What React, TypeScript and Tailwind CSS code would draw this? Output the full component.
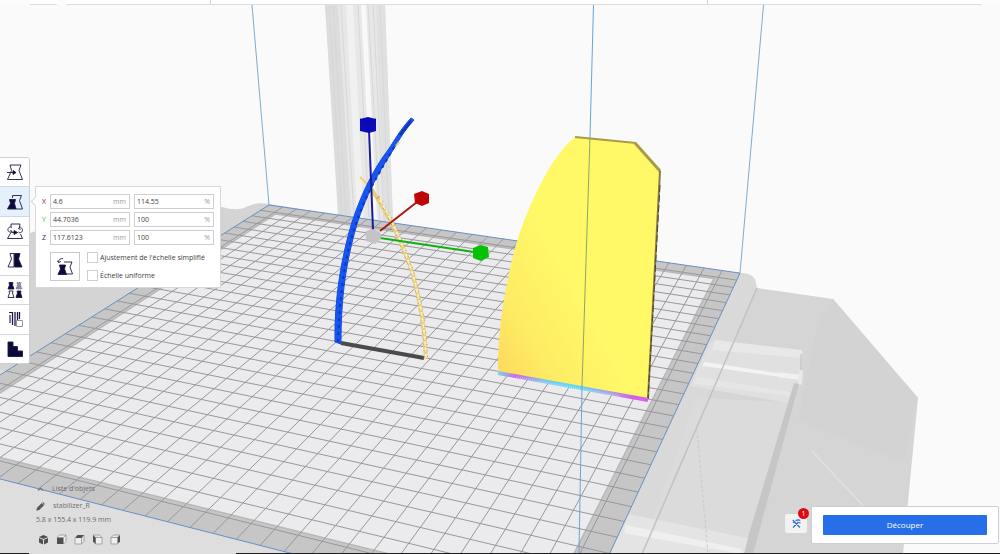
import React, { useState } from 'react';

type Point = [number, number];

const CELLS = 30;
const BORDER = 1.2;

// Perspective projection of the build plate, u and v are given in grid cells
function project(u: number, v: number): Point {
  const s = u / CELLS;
  const t = v / CELLS;
  const w = 1 - 0.1324 * s - 0.3517 * t;
  return [(373 * s - 344.9 * t + 269) / w, (31.9 * s + 86.1 * t + 205) / w];
}

function toPoints(points: Point[]) {
  return points.map(([x, y]) => `${x.toFixed(1)},${y.toFixed(1)}`).join(' ');
}

function plateRect(inset: number) {
  const far = CELLS - inset;
  return toPoints([
    project(inset, inset),
    project(far, inset),
    project(far, far),
    project(inset, far),
  ]);
}

function PlateGrid() {
  const d = Array.from({ length: CELLS - 1 }, (_, i) => {
    const n = i + 1;
    return (
      `M${toPoints([project(n, 0)])}L${toPoints([project(n, CELLS)])}` +
      `M${toPoints([project(0, n)])}L${toPoints([project(CELLS, n)])}`
    );
  }).join('');

  return (
    <g>
      <polygon points={plateRect(0)} fill="#c6c6c7" />
      <polygon points={plateRect(BORDER)} fill="#ebebed" stroke="#b8b8b9" strokeWidth="1.5" />
      <path d={d} stroke="#98989b" strokeWidth="1" fill="none" />
      <polygon points={plateRect(0)} fill="none" stroke="#6690c4" strokeWidth="1" />
    </g>
  );
}

function Printer() {
  return (
    <g>
      {/* Frame on the left */}
      <path d="M0 243L45 228L150 211L222 207Q238 212 248 206Q256 202 269 204L400 225V400L0 420Z" fill="#d4d4d4" />
      <path d="M0 370L400 400L640 554H0Z" fill="#dddddd" />
      <path d="M0 479L287 554H0Z" fill="#dedede" />
      {/* Vertical column */}
      <path d="M325 5H385L393 222L339 215Z" fill="#e7e7e7" />
      <path d="M325 5H338L351 216L338 215Z" fill="#dcdcdc" />
      <path d="M346 5H353L364 218L357 217Z" fill="#f1f1f1" />
      <path d="M361 5H366L377 219L372 219Z" fill="#f8f8f8" />
      <path d="M376 5H385L393 222L384 221Z" fill="#e0e0e0" />
      <path d="M341 5L354 216M358 5L369 218M368 5L380 220M373 5L384 221" stroke="#d8d8d8" fill="none" />
      <path d="M329 5L342 215M333 5L346 216M380 5L389 221" stroke="#d4d4d4" strokeWidth="0.7" fill="none" />
      {/* Housing on the right */}
      <path d="M740 273Q754 273 757 288L833 299L918 398L903 554H560V400Z" fill="#d5d5d5" />
      <path d="M740 273Q758 273 756 288L643 554H600V420Z" fill="#d9d9d9" />
      <path d="M833 299L818 325L798 420L903 462L918 398Z" fill="#d3d3d3" />
      <path d="M697 398L790 402L745 554H640Z" fill="#dbdbdb" />
      <path d="M710 342L803 352L794 404L690 386Z" fill="#e0e0e0" />
      <path d="M715 340L802 350V358L712 350Z" fill="#e8e8e8" />
      <path d="M705 362L796 376V379L702 366Z" fill="#f3f3f3" />
      <path d="M697 377L790 392V396L694 384Z" fill="#e6e6e6" />
      <path d="M780 375L798 377" stroke="#f1f1f1" strokeWidth="5" strokeLinecap="round" />
      <path d="M801 372L800 383" stroke="#e9e9e9" strokeWidth="4" strokeLinecap="round" />
      <path d="M801 354V370" stroke="#c8c8c8" strokeWidth="1.5" />
      <path d="M794 383L799 384L753 554H743Z" fill="#c6c6c6" />
      <path d="M628 514L748 538L744 554H610Z" fill="#e4e4e4" />
      <path d="M626 525L742 549V554L624 533Z" fill="#efefef" />
      <path d="M757 288L642 554" stroke="#c2c2c2" strokeWidth="1.5" fill="none" />
      <path d="M697 430L708 554" stroke="#cacaca" strokeDasharray="3 2" fill="none" />
      <path d="M812 451L868 511" stroke="#dedede" strokeWidth="2" fill="none" />
    </g>
  );
}

function Models() {
  const blade =
    'M414 120C402 133 399 141 390 155C378 173 366 196 357 224C346 262 341 296 341 344L335 342C334 298 342 255 352 222C362 192 374 168 388 150C396 138 400 130 411 118Z';

  return (
    <g>
      {/* Blade standing in front of the column */}
      <path d="M341 343L424 358" stroke="#4a4a4a" strokeWidth="4" />
      <path d="M360 177L372 189" stroke="#f3cf78" strokeWidth="2" />
      <path d="M370 187C394 223 404 248 413 275C421 304 425 330 426 359" stroke="#e8cd80" strokeWidth="4" fill="none" />
      <path d="M378 197C394 223 404 248 413 275C421 304 425 330 426 359" stroke="#b89c4c" strokeWidth="4" strokeDasharray="1 5" fill="none" />
      <path d="M380 200C395 225 404 248 413 275C421 304 425 330 426 359" stroke="#f6efc4" strokeWidth="2" strokeDasharray="4 2" fill="none" />
      <path d={blade} fill="#1656f5" stroke="#174cd8" strokeWidth="1" />
      <path d="M411 121L400 135" stroke="#1238bb" strokeWidth="3" />
      <path d="M394 147L373 184C352 225 341 262 338 342" stroke="#1038b8" strokeWidth="2" strokeDasharray="3 4" fill="none" />
      <path d="M396 146L399 142" stroke="#e5cc80" strokeWidth="2" />

      {/* Stabilizer */}
      <path d="M575 137L636 143L660 171L648 400L498 372C498 335 502 308 508 278C516 237 530 201 550 167C558 154 567 143 575 137Z" fill="url(#stabilizer)" />
      <path d="M575 137L636 143" stroke="#a99b45" strokeWidth="2" fill="none" />
      <path d="M635 143L660 171" stroke="#a99b45" strokeWidth="3" fill="none" />
      <path d="M660 171L648 399" stroke="#8a7b40" strokeWidth="2" fill="none" />
      <path d="M660 185L648 399" stroke="#4a4430" strokeWidth="1" strokeDasharray="7 3" fill="none" />
      <path d="M498 373L648 400" stroke="url(#brim)" strokeWidth="4" fill="none" />
      <path d="M516 377L620 396" stroke="#ffffff" strokeOpacity="0.3" strokeWidth="2" strokeDasharray="1 1" fill="none" />
    </g>
  );
}

function Gizmo() {
  return (
    <g>
      <path d="M373 230L369 130" stroke="#1a1a9c" strokeWidth="2" />
      <path d="M380 231L417 202" stroke="#a81818" strokeWidth="2" />
      <path d="M380 238L474 252" stroke="#10b010" strokeWidth="2" />
      <path d="M366 231L373 229L380 232L381 239L375 244L366 241Z" fill="#c3c3c8" />
      <path d="M360 119L368 117L376 119V131L369 133L360 131Z" fill="#0b0bb8" />
      <path d="M360 119L368 122L376 119M368 122V132" stroke="#0808a0" fill="none" />
      <path d="M414 194L422 191L429 194V203L422 206L415 203Z" fill="#bd0505" />
      <path d="M473 248L481 245L488 247L489 257L481 261L473 258Z" fill="#08c008" />
    </g>
  );
}

function Scene() {
  return (
    <svg className="absolute inset-0 h-full w-full" viewBox="0 0 1000 554" preserveAspectRatio="xMidYMid slice" aria-hidden="true">
      <defs>
        <linearGradient id="stabilizer" x1="0" y1="0.9" x2="0.45" y2="0.5">
          <stop offset="0" stopColor="#fcd95e" />
          <stop offset="0.4" stopColor="#feec64" />
          <stop offset="1" stopColor="#fff968" />
        </linearGradient>
        <linearGradient id="brim">
          <stop offset="0" stopColor="#77d5ee" />
          <stop offset="0.12" stopColor="#cf68e6" />
          <stop offset="0.3" stopColor="#7fc4ee" />
          <stop offset="0.5" stopColor="#5cdcf0" />
          <stop offset="0.75" stopColor="#a9a2ea" />
          <stop offset="0.9" stopColor="#d55eea" />
          <stop offset="1" stopColor="#d55eea" />
        </linearGradient>
      </defs>
      <Printer />
      <PlateGrid />
      <path d="M252 5L269 205M763.5 5L740 273" stroke="#7fabc9" fill="none" />
      <Models />
      <path d="M593.5 5L590 137M582 386L579 554" stroke="#6ba3d2" fill="none" />
      <path d="M590 137L582 386" stroke="#8ba56d" strokeWidth="1" fill="none" />
      <Gizmo />
    </svg>
  );
}

const BEAKER = 'M3 1H14L12 6.5L15.5 15.5H.5L4.5 6.5Z';

function ToolIcon({ name }: { name: string }) {
  return (
    <svg className="h-4 w-4" viewBox="0 0 16 16" fill="none" stroke="#1d1b45" strokeWidth="0.9">
      {name === 'Déplacer' && (
        <>
          <path d={BEAKER} />
          <path d="M0 8.5H8" />
          <path d="M6 6.5L9 8.5L6 10.5Z" fill="#0c0a3c" />
        </>
      )}
      {name === 'Échelle' && (
        <>
          <path d="M5.500 4V1.500H14.500L12.500 6.500L15.500 15H9" />
          <path d="M2.500 5.500H8.500L7.500 9.500L9 15H.5L3.500 9.500Z" fill="#0c0a3c" />
        </>
      )}
      {name === 'Tourner' && (
        <>
          <path d="M4 4V1H13L12.500 4M3 11L.5 15.500H15.500L13.500 11" />
          <path d="M5 4.500C2.500 3 .500 5 1 7.500C1.500 9 3.500 9.500 5 8.500M3 11L5 8.500L3.500 7" />
          <path d="M11.500 9C13.500 10.500 15.500 9 15.500 7C15.500 5 13 4 11.500 5.500M13 3.500L11.500 5.500L13.500 6.500" />
          <path d="M5 9.500H8" />
          <path d="M7 7.500L10.500 9.500L7 11.500Z" fill="#0c0a3c" />
        </>
      )}
      {name === 'Miroir' && (
        <>
          <path d="M7 1.500H3L4.500 7L1 15H7Z" />
          <path d="M7.500 1.500H13L11.500 7L15 15H7.500Z" fill="#0c0a3c" />
        </>
      )}
      {name === 'Paramètres par modèle' && (
        <>
          <path d="M2 .5H6L5.500 3L7 7H1L2.500 3ZM10 9H14L13.500 11L15 15.500H9L10.500 11Z" fill="#0c0a3c" />
          <path d="M2 9H6L5.500 11L7 15.500H1L2.500 11Z" />
          <path d="M10 .5H14L13.500 3L15 7H9L10.500 3Z" fill="#8d8ca4" stroke="#6d6c88" strokeDasharray="1 1" />
        </>
      )}
      {name === 'Bloqueur de supports' && (
        <>
          <path d="M2 1.500H5M3 4V12" strokeWidth="1.100" />
          <path d="M5.500 1V14M8 1V15M10.500 1V10M12.500 1V8" strokeWidth="1.300" />
          <path d="M9.500 9.500H15.500V15.500H9.500Z" fill="#fff" stroke="#8a8a95" />
        </>
      )}
      {name === 'Supports' && <path d="M1 1H6V5.500H10.500V10H15.500V15.500H1Z" fill="#0c0a3c" />}
    </svg>
  );
}

const TOOLS = [
  'Déplacer',
  'Échelle',
  'Tourner',
  'Miroir',
  'Paramètres par modèle',
  'Bloqueur de supports',
  'Supports',
];

function Toolbar({ active, onSelect }: { active: string; onSelect: (tool: string) => void }) {
  return (
    <nav className="flex h-[207px] w-[30px] shrink-0 flex-col divide-y divide-[#d3d8de] overflow-hidden rounded-r-[3px] border border-l-0 border-[#d0d0d4] bg-white">
      {TOOLS.map(tool => (
        <button
          key={tool}
          type="button"
          aria-label={tool}
          onClick={() => onSelect(tool)}
          className={
            tool === active
              ? 'flex flex-1 items-center justify-center bg-[#e4f0fb]'
              : 'flex flex-1 items-center justify-center bg-white'
          }
        >
          <ToolIcon name={tool} />
        </button>
      ))}
    </nav>
  );
}

interface FieldProps {
  label: string;
  unit: string;
  value: string;
  onChange: (value: string) => void;
}

function Field({ label, unit, value, onChange }: FieldProps) {
  return (
    <div className="flex h-[15px] min-w-0 flex-1 items-center border border-[#cfcfd3] bg-white pr-[3px] pl-[2px]">
      <input
        aria-label={label}
        value={value}
        onChange={e => onChange(e.target.value)}
        className="min-w-0 flex-1 bg-transparent text-[7px] leading-[13px] text-[#3f3f43] outline-none"
      />
      <span className="text-[7px] leading-[13px] text-[#9a9a9e]">{unit}</span>
    </div>
  );
}

const AXES = [
  { axis: 'X', color: 'text-[#b8202c]' },
  { axis: 'Y', color: 'text-[#2fb52f]' },
  { axis: 'Z', color: 'text-[#22228c]' },
];

function ScalePanel() {
  const [sizes, setSizes] = useState(['4.6', '44.7036', '117.6123']);
  const [percents, setPercents] = useState(['114.55', '100', '100']);
  const [snap, setSnap] = useState(false);
  const [uniform, setUniform] = useState(false);

  const replace = (list: string[], index: number, value: string) =>
    list.map((item, i) => (i === index ? value : item));

  return (
    <section className="relative mt-[29px] ml-[5px] w-[186px] border border-[#d8d8da] bg-white px-[6px] pt-[7px] pb-[6px]">
      <div className="absolute top-[11px] -left-[4px] h-[7px] w-[7px] rotate-45 border-b border-l border-[#d8d8da] bg-white" />
      <div className="flex flex-col gap-[3px]">
        {AXES.map(({ axis, color }, i) => (
          <div key={axis} className="flex items-center gap-[4px]">
            <span className={`w-[4px] text-[7px] leading-[13px] ${color}`}>{axis}</span>
            <Field
              label={`${axis} en mm`}
              unit="mm"
              value={sizes[i]}
              onChange={value => setSizes(prev => replace(prev, i, value))}
            />
            <Field
              label={`${axis} en %`}
              unit="%"
              value={percents[i]}
              onChange={value => setPercents(prev => replace(prev, i, value))}
            />
          </div>
        ))}
      </div>
      <div className="mt-[7px] ml-[8px] flex gap-[7px]">
        <button
          type="button"
          aria-label="Réinitialiser l'échelle"
          className="flex h-[29px] w-[30px] items-center justify-center border border-[#c9c9cd] bg-white"
        >
          <svg className="h-[19px] w-4" viewBox="0 0 16 19" fill="none" stroke="#1d1b45" strokeWidth="0.9">
            <path d="M7 5H15L13 10L15.500 17H9" />
            <path d="M2.500 8H8.500L7.500 12L9.500 17.500H1L3.500 12Z" fill="#0c0a3c" />
            <path d="M1.500 5C1.500 2.500 3.500 1.500 6 1.500M0 3.500L1.500 5.500L4 4.500" />
          </svg>
        </button>
        <div className="flex flex-col gap-[7px]">
          <label className="flex h-[11px] items-center gap-[2px] text-[7px] leading-[11px] text-[#3d3d42]">
            <input
              type="checkbox"
              checked={snap}
              onChange={e => setSnap(e.target.checked)}
              className="h-[11px] w-[11px] shrink-0 appearance-none border border-[#cfcfd3] bg-white checked:bg-[#266fe8]"
            />
            Ajustement de l'échelle simplifié
          </label>
          <label className="flex h-[11px] items-center gap-[2px] text-[7px] leading-[11px] text-[#3d3d42]">
            <input
              type="checkbox"
              checked={uniform}
              onChange={e => setUniform(e.target.checked)}
              className="h-[11px] w-[11px] shrink-0 appearance-none border border-[#cfcfd3] bg-white checked:bg-[#266fe8]"
            />
            Échelle uniforme
          </label>
        </div>
      </div>
    </section>
  );
}

const VIEWS = [
  { label: 'Vue 3D', solid: 'M1 3L5.500 1L10 3L5.500 5ZM1 4L5 5.800V10.500L1 8.500ZM10 4L6 5.800V10.500L10 8.500Z', edge: '' },
  { label: 'Vue de face', solid: 'M1 3.500H7.500V10H1Z', edge: 'M1 3.500L3.500 1H10V7.500L7.500 10M7.500 3.500L10 1' },
  { label: 'Vue du dessus', solid: 'M1 4L3.500 1H10L7.500 4Z', edge: 'M1 4V10H7.500V4M7.500 10L10 7.500V1' },
  { label: 'Vue de gauche', solid: 'M1 1L3.500 3.500V10L1 7.500Z', edge: 'M1 1H7.500L10 3.500V10H3.500V3.500H10' },
  { label: 'Vue de droite', solid: 'M7.500 3.500L10 1V7.500L7.500 10Z', edge: 'M7.500 3.500H1V10H7.500M1 3.500L3.500 1H10' },
];

function ObjectInfo() {
  return (
    <section className="ml-[36px] flex flex-col items-start text-[7px] text-[#6d6d70]">
      <button type="button" className="flex h-[14px] items-center gap-[7px]">
        <svg className="h-[9px] w-[9px]" viewBox="0 0 9 9" fill="none" stroke="#77777a" strokeWidth="1.2">
          <path d="M2 5.500L4.500 3L7 5.500" />
        </svg>
        Liste d'objets
      </button>
      <div className="mt-[4px] flex h-[12px] items-center gap-[8px]">
        <svg className="h-[9px] w-[9px]" viewBox="0 0 9 9" fill="#565659">
          <path d="M.3 8.700L1 5.800L5.800 .9L8.100 3.200L3.200 8ZM6.300 .6L7 .1L8.900 2L8.400 2.700Z" />
        </svg>
        stabilizer_R
      </div>
      <p className="mt-[2px] leading-[12px]">5.8 x 155.4 x 119.9 mm</p>
      <div className="mt-[8px] ml-[2px] flex gap-[7px]">
        {VIEWS.map(view => (
          <button key={view.label} type="button" aria-label={view.label}>
            <svg className="h-[11px] w-[11px]" viewBox="0 0 11 11" fill="none" stroke="#8b8b8e" strokeWidth="0.7">
              {view.edge && <path d={view.edge} fill="#eeeeee" />}
              <path d={view.solid} fill="#4f4f52" stroke="none" />
            </svg>
          </button>
        ))}
      </div>
    </section>
  );
}

function SlicePanel() {
  return (
    <section className="mr-[1px] mb-[1px] flex items-start gap-[4px]">
      <button
        type="button"
        aria-label="Avertissements"
        className="relative mt-[8px] flex h-[19px] w-[22px] items-center justify-center rounded-[2px] bg-[#f1f2f4]"
      >
        <svg className="h-[9px] w-[9px]" viewBox="0 0 9 9" fill="none" stroke="#2f66c4" strokeWidth="1.2">
          <path d="M1 8.500L6.500 3M8 8.500L2.500 3M.8 .8L2.500 3L.8 3.500M3.500 1.800Q6 .3 8.300 1.500M6 3.500L8.500 3.800" />
        </svg>
        <span className="absolute -top-[6px] -right-[2px] h-[11px] w-[11px] rounded-full bg-[#e10a12] text-center text-[7px] leading-[11px] text-white">
          1
        </span>
      </button>
      <div className="w-[188px] rounded-[2px] border border-[#cfcfd1] bg-white px-[11px] py-[8px]">
        <button type="button" className="block h-[20px] w-full rounded-[1px] bg-[#266fe8] text-[8px] leading-[20px] text-white">
          Découper
        </button>
      </div>
    </section>
  );
}

export default function App() {
  const [activeTool, setActiveTool] = useState('Échelle');

  return (
    <div className="relative flex min-h-screen flex-col overflow-hidden bg-[#fafafa] font-['Open_Sans','Noto_Sans',sans-serif]">
      <Scene />

      {/* Lower edge of the stage bar */}
      <header className="relative flex h-[5px] gap-[9px] bg-[#fbfbfb] pr-[18px] pl-[30px]">
        <div className="w-[27px] border-b border-[#dedede] bg-white" />
        <div className="flex flex-1 border-b border-[#dedede] bg-white">
          <div className="w-[145px] border-r border-[#d4d4d4]" />
          <div className="flex-1 border-r border-[#d4d4d4]" />
          <div className="w-[274px]" />
        </div>
      </header>

      <main className="relative flex flex-1 flex-col justify-between pt-[152px]">
        <div className="flex items-start">
          <Toolbar active={activeTool} onSelect={setActiveTool} />
          {activeTool === 'Échelle' && <ScalePanel />}
        </div>
        <div className="flex items-end justify-between pb-[8px]">
          <ObjectInfo />
          <SlicePanel />
        </div>
      </main>

      <footer className="relative flex h-px">
        <div className="w-[29px] bg-[#1c1c1c]" />
        <div className="ml-[207px] flex-1 bg-[#1c1c1c]" />
      </footer>
    </div>
  );
}
